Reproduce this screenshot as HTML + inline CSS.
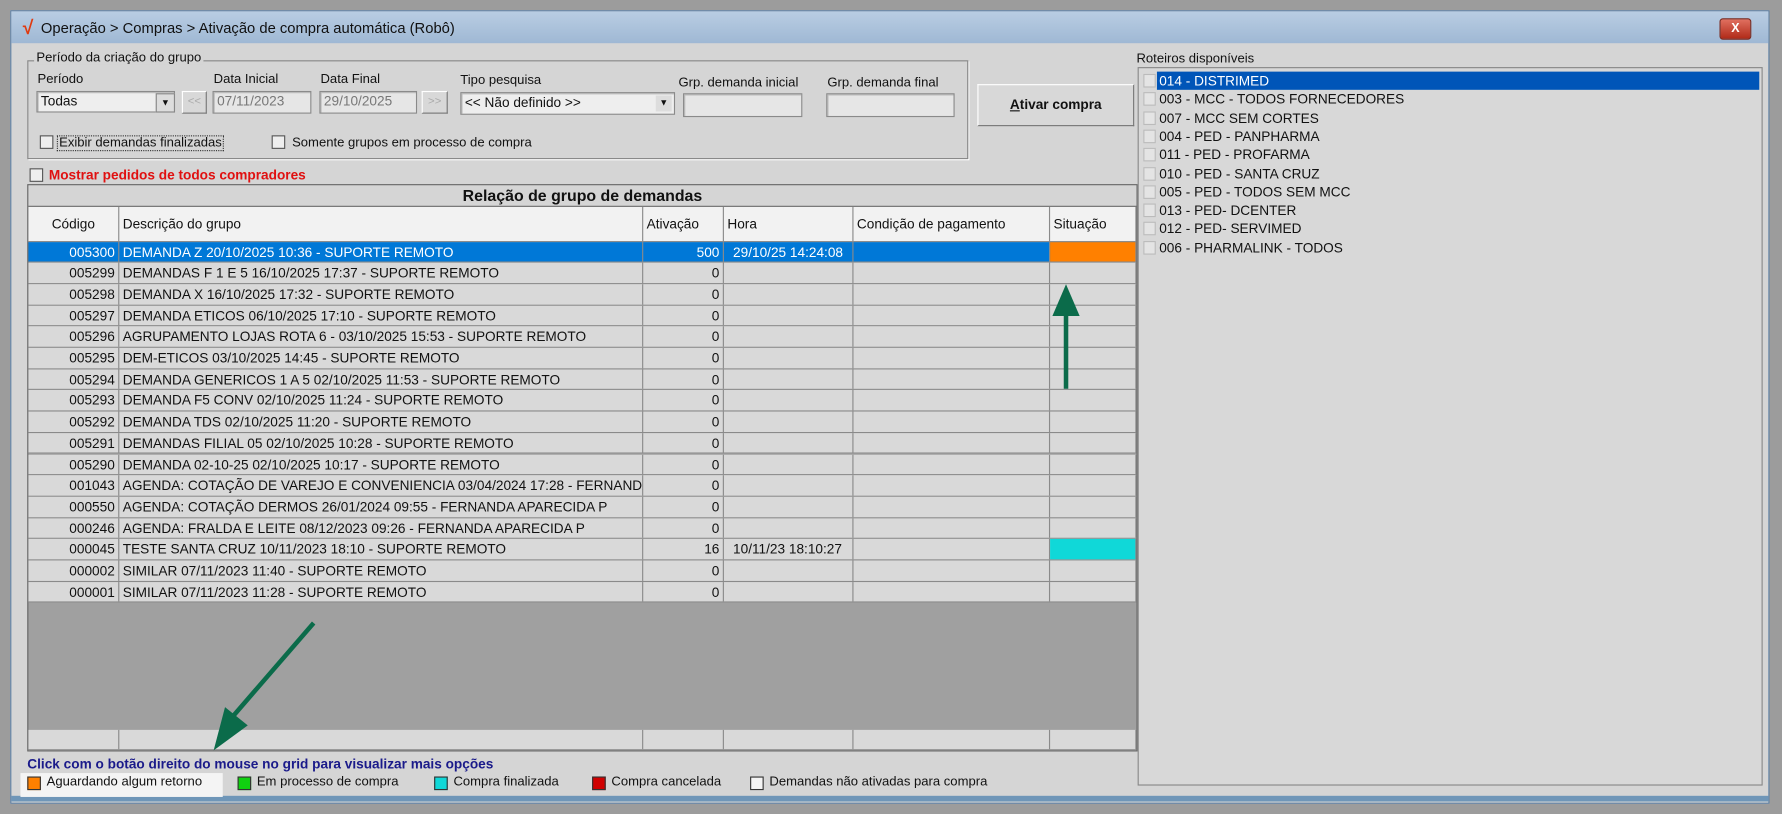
<!DOCTYPE html>
<html><head><meta charset="utf-8"><style>
html,body{margin:0;padding:0;background:#9c9c9c;overflow:hidden;width:1782px;height:814px}
#s{position:absolute;left:0;top:0;width:1568px;height:716px;transform:scale(1.13648,1.13687);transform-origin:0 0;font-family:"Liberation Sans",sans-serif;font-size:12px;color:#111}
.a{position:absolute;white-space:nowrap}
.in{position:absolute;background:#e6e6e6;border:1px solid #8a8a8a;box-shadow:inset 1px 1px 0 #bbb;box-sizing:border-box;padding:1px 3px;color:#777}
.cb{position:absolute;width:10px;height:10px;border:1px solid #555;background:#eee}
.btn{position:absolute;background:#d8d8d8;border:1px solid #fff;border-right-color:#777;border-bottom-color:#777;box-sizing:border-box}
.row{position:absolute;left:25px;width:975px;height:18.7px;background:#d9d9d9;border-bottom:1px solid #8a8a8a;box-sizing:border-box}
.c{position:absolute;top:0;height:100%;border-right:1px solid #8a8a8a;box-sizing:border-box;line-height:18px;padding:0 3px;overflow:hidden;white-space:nowrap}
.li{position:absolute;left:1006px;height:16.5px;line-height:16px;font-size:12px}
.li i{display:inline-block;width:9px;height:10px;border:1px solid #bbb;background:#e4e4e4;vertical-align:-2px;margin-right:3px}
.lg{position:absolute;top:683px;width:12px;height:12px;border:1px solid #333;box-sizing:border-box}
</style></head><body><div id="s">
<div class="a" style="left:9px;top:9px;width:1548px;height:698px;background:#d5d5d5;border:1px solid #5d7fa3;box-sizing:border-box"></div>
<div class="a" style="left:10px;top:10px;width:1546px;height:28px;background:linear-gradient(#b9cde3,#9fb8d4)"></div>
<div class="a" style="left:20px;top:15px;font-size:17px;color:#e03a10;font-weight:bold">√</div>
<div class="a" style="left:36px;top:17px;font-size:13px;color:#111">Operação &gt; Compras &gt; Ativação de compra automática (Robô)</div>
<div class="a" style="left:1513px;top:16px;width:26px;height:17px;background:linear-gradient(#e07060,#b02a18);border:1px solid #7a2a20;border-radius:3px;color:#fff;font-size:11px;text-align:center;line-height:16px;font-weight:bold">X</div>
<div class="a" style="left:10px;top:700px;width:1546px;height:5px;background:#6f96b8"></div>

<div class="a" style="left:24px;top:53px;width:828px;height:87px;border:1px solid #888;box-shadow:1px 1px 0 #fff;box-sizing:border-box"></div>
<div class="a" style="left:30px;top:45px;background:#d5d5d5;padding:0 2px;font-size:11.5px">Período da criação do grupo</div>
<div class="a" style="left:33px;top:64px;font-size:11.5px">Período</div>
<div class="in" style="left:32px;top:80px;width:122px;height:19px;color:#111;background:#eee">Todas</div>
<div class="a" style="left:137px;top:82px;width:15px;height:15px;background:#ddd;border:1px solid #888;font-size:8px;text-align:center;line-height:15px">▼</div>
<div class="btn" style="left:160px;top:80px;width:22px;height:20px;color:#aaa;text-align:center;line-height:18px;font-size:10px">&lt;&lt;</div>
<div class="a" style="left:188px;top:64px;font-size:11.5px">Data Inicial</div>
<div class="in" style="left:187px;top:80px;width:87px;height:20px">07/11/2023</div>
<div class="a" style="left:282px;top:64px;font-size:11.5px">Data Final</div>
<div class="in" style="left:281px;top:80px;width:86px;height:20px">29/10/2025</div>
<div class="btn" style="left:371px;top:80px;width:23px;height:20px;color:#aaa;text-align:center;line-height:18px;font-size:10px">&gt;&gt;</div>
<div class="a" style="left:405px;top:65px;font-size:11.5px">Tipo pesquisa</div>
<div class="in" style="left:405px;top:81px;width:189px;height:20px;color:#111;background:#eee">&lt;&lt; Não definido &gt;&gt;</div>
<div class="a" style="left:577px;top:84px;width:14px;height:14px;background:#ddd;font-size:8px;text-align:center;line-height:14px">▼</div>
<div class="a" style="left:597px;top:67px;font-size:11.5px">Grp. demanda inicial</div>
<div class="in" style="left:601px;top:82px;width:105px;height:21px"></div>
<div class="a" style="left:728px;top:67px;font-size:11.5px">Grp. demanda final</div>
<div class="in" style="left:727px;top:82px;width:113px;height:21px"></div>
<div class="cb" style="left:35px;top:119px"></div>
<div class="a" style="left:50px;top:119px;font-size:11.5px;border:1px dotted #333;padding:0 1px">Exibir demandas finalizadas</div>
<div class="cb" style="left:239px;top:119px"></div>
<div class="a" style="left:257px;top:120px;font-size:11.5px">Somente grupos em processo de compra</div>
<div class="btn" style="left:860px;top:74px;width:138px;height:37px;font-weight:bold;text-align:center;line-height:35px;font-size:12px"><u>A</u>tivar compra</div>

<div class="cb" style="left:26px;top:148px"></div>
<div class="a" style="left:43px;top:147px;color:#e01010;font-weight:bold;font-size:12px">Mostrar pedidos de todos compradores</div>

<div class="a" style="left:24px;top:162px;width:977px;height:499px;background:#a0a0a0;border:1px solid #666;box-sizing:border-box"></div>
<div class="a" style="left:25px;top:163px;width:975px;height:18px;background:#d5d5d5;border-bottom:1px solid #666;text-align:center;font-weight:bold;font-size:14px;line-height:18px">Relação de grupo de demandas</div>
<div class="row" style="top:182px;height:31px;background:#f2f2f2">
<div class="c" style="left:0;width:80px;line-height:30px;text-align:center">Código</div>
<div class="c" style="left:80px;width:461px;line-height:30px">Descrição do grupo</div>
<div class="c" style="left:541px;width:71px;line-height:30px">Ativação</div>
<div class="c" style="left:612px;width:114px;line-height:30px">Hora</div>
<div class="c" style="left:726px;width:173px;line-height:30px">Condição de pagamento</div>
<div class="c" style="left:899px;width:76px;line-height:30px">Situação</div>
</div>
<div id="rows"></div>
<div class="row" style="top:642px;height:18px">
<div class="c" style="left:0;width:80px"></div><div class="c" style="left:80px;width:461px"></div><div class="c" style="left:541px;width:71px"></div><div class="c" style="left:612px;width:114px"></div><div class="c" style="left:726px;width:173px"></div><div class="c" style="left:899px;width:76px"></div></div>

<div class="a" style="left:24px;top:665px;color:#1a1a8a;font-weight:bold;font-size:12px">Click com o botão direito do mouse no grid para visualizar mais opções</div>
<div class="a" style="left:18px;top:680px;width:178px;height:21px;background:#f4f4f4"></div>
<div class="lg" style="left:24px;background:#ff8000"></div><div class="a" style="left:41px;top:682px;font-size:11.5px">Aguardando algum retorno</div>
<div class="lg" style="left:209px;background:#10d010"></div><div class="a" style="left:226px;top:682px;font-size:11.5px">Em processo de compra</div>
<div class="lg" style="left:382px;background:#10d8d8"></div><div class="a" style="left:399px;top:682px;font-size:11.5px">Compra finalizada</div>
<div class="lg" style="left:521px;background:#d00000"></div><div class="a" style="left:538px;top:682px;font-size:11.5px">Compra cancelada</div>
<div class="lg" style="left:660px;background:#f4f4f4"></div><div class="a" style="left:677px;top:682px;font-size:11.5px">Demandas não ativadas para compra</div>

<div class="a" style="left:1000px;top:46px;font-size:11.5px">Roteiros disponíveis</div>
<div class="a" style="left:1001px;top:59px;width:550px;height:632px;background:#d8d8d8;border:1px solid #888;box-sizing:border-box"></div>
<div class="a" style="left:1018px;top:63px;width:530px;height:16px;background:#0055b8"></div>
<div id="list"></div>

<svg class="a" style="left:0;top:0" width="1568" height="716">
<g fill="#0b6b4a" stroke="#0b6b4a">
<line x1="938" y1="342" x2="938" y2="270" stroke-width="4"/>
<polygon points="938,250 926,278 950,278" stroke="none"/>
<line x1="276" y1="548" x2="205" y2="630" stroke-width="4"/>
<polygon points="188,660 198,622 218,638" stroke="none"/>
</g></svg>
</div>
<script>
var d=[["005300","DEMANDA Z 20/10/2025 10:36 - SUPORTE REMOTO","500","29/10/25 14:24:08"],
["005299","DEMANDAS F 1 E 5 16/10/2025 17:37 - SUPORTE REMOTO","0",""],
["005298","DEMANDA X 16/10/2025 17:32 - SUPORTE REMOTO","0",""],
["005297","DEMANDA ETICOS 06/10/2025 17:10 - SUPORTE REMOTO","0",""],
["005296","AGRUPAMENTO LOJAS ROTA 6 - 03/10/2025 15:53 - SUPORTE REMOTO","0",""],
["005295","DEM-ETICOS 03/10/2025 14:45 - SUPORTE REMOTO","0",""],
["005294","DEMANDA GENERICOS 1 A 5 02/10/2025 11:53 - SUPORTE REMOTO","0",""],
["005293","DEMANDA F5 CONV 02/10/2025 11:24 - SUPORTE REMOTO","0",""],
["005292","DEMANDA TDS 02/10/2025 11:20 - SUPORTE REMOTO","0",""],
["005291","DEMANDAS FILIAL 05 02/10/2025 10:28 - SUPORTE REMOTO","0",""],
["005290","DEMANDA 02-10-25 02/10/2025 10:17 - SUPORTE REMOTO","0",""],
["001043","AGENDA: COTAÇÃO DE VAREJO E CONVENIENCIA 03/04/2024 17:28 - FERNANDA","0",""],
["000550","AGENDA: COTAÇÃO DERMOS 26/01/2024 09:55 - FERNANDA APARECIDA P","0",""],
["000246","AGENDA: FRALDA E LEITE 08/12/2023 09:26 - FERNANDA APARECIDA P","0",""],
["000045","TESTE SANTA CRUZ 10/11/2023 18:10 - SUPORTE REMOTO","16","10/11/23 18:10:27"],
["000002","SIMILAR 07/11/2023 11:40 - SUPORTE REMOTO","0",""],
["000001","SIMILAR 07/11/2023 11:28 - SUPORTE REMOTO","0",""]];
var h="";d.forEach(function(r,i){var t=212.5+i*18.7,sel=i==0,st=sel?'background:#0078d7;color:#fff;':'';
var sit=i==0?'background:#ff8000;':(i==14?'background:#10d8d8;':'');
h+='<div class="row" style="top:'+t+'px;'+st+'"><div class="c" style="left:0;width:80px;text-align:right">'+r[0]+'</div><div class="c" style="left:80px;width:461px">'+r[1]+'</div><div class="c" style="left:541px;width:71px;text-align:right">'+r[2]+'</div><div class="c" style="left:612px;width:114px;padding-left:8px">'+r[3]+'</div><div class="c" style="left:726px;width:173px"></div><div class="c" style="left:899px;width:76px;'+sit+'"></div></div>';});
document.getElementById("rows").innerHTML=h;
var l=["014 - DISTRIMED","003 - MCC - TODOS FORNECEDORES","007 - MCC SEM CORTES","004 - PED - PANPHARMA","011 - PED - PROFARMA","010 - PED - SANTA CRUZ","005 - PED - TODOS SEM MCC","013 - PED- DCENTER","012 - PED- SERVIMED","006 - PHARMALINK - TODOS"];
h="";l.forEach(function(s,i){h+='<div class="li" style="top:'+(63+i*16.3)+'px;'+(i==0?'color:#fff;':'')+'"><i></i>'+s+'</div>';});
document.getElementById("list").innerHTML=h;
</script>
</body></html>
